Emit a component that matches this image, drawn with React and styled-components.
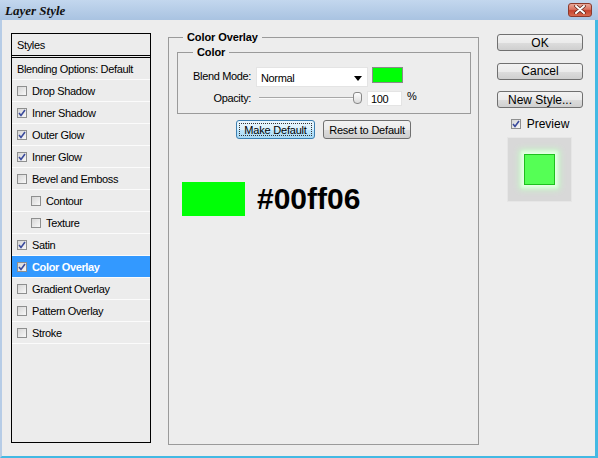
import React from 'react'
import styled, { createGlobalStyle } from 'styled-components'

const GlobalStyle = createGlobalStyle`
  body {
    margin: 0;
    background: #ececec;
    font-family: "Liberation Sans", Arial, sans-serif;
  }
  * { box-sizing: border-box; }
`

const ui = '"Liberation Sans", Arial, sans-serif'

const Window = styled.div`
  display: flex;
  flex-direction: column;
  width: 598px;
  height: 458px;
  overflow: hidden;
  font-family: ${ui};
  font-size: 11px;
  letter-spacing: -0.35px;
  color: #000;
`

const TitleBar = styled.div`
  display: flex;
  align-items: center;
  justify-content: space-between;
  height: 20px;
  padding: 0 6px 0 5px;
  background: linear-gradient(#c3d7ee, #a9c3e1);
`

const Title = styled.div`
  font-family: "Liberation Serif", "Times New Roman", serif;
  font-style: italic;
  font-weight: bold;
  font-size: 13px;
  letter-spacing: 0;
  color: #111;
  padding-top: 2px;
`

const CloseButton = styled.div`
  display: flex;
  align-items: center;
  justify-content: center;
  width: 24px;
  height: 14px;
  margin-top: -1px;
  border: 1px solid #8c3a2c;
  border-radius: 3px;
  background: linear-gradient(#eaa999 0%, #d9715f 45%, #c6432e 55%, #d86a4f 100%);
`

const Body = styled.div`
  flex: 1;
  display: flex;
  align-items: flex-start;
  padding-left: 9px;
  background: #ededed;
  border-left: 2px solid #b6cce6;
  border-right: 3px solid #43b9e3;
  border-bottom: 2px solid #43b9e3;
`

const List = styled.div`
  width: 140px;
  height: 410px;
  margin-top: 13px;
  border: 1px solid #000;
  background: #ececec;
`

const Header = styled.div`
  display: flex;
  align-items: center;
  height: 22px;
  padding-left: 5px;
  border-bottom: 1px solid #000;
  margin-bottom: 1px;
`

const Row = styled.div`
  display: flex;
  align-items: center;
  gap: 5px;
  height: ${p => (p.$first ? 23 : 22)}px;
  padding-left: ${p => (p.$indent ? 19 : 5)}px;
  border-top: ${p => (p.$first ? '1px solid #000' : 'none')};
  border-bottom: 1px solid #fbfbfb;
  background: ${p => (p.$selected ? '#3399ff' : 'transparent')};
  color: ${p => (p.$selected ? '#fff' : '#000')};
  font-weight: ${p => (p.$selected ? 'bold' : 'normal')};
`

const Box = styled.span`
  display: flex;
  align-items: center;
  justify-content: center;
  flex: none;
  width: 10px;
  height: 10px;
  border: 1px solid #8e8f8f;
  background: linear-gradient(135deg, #d6d6d6, #f8f8f8);
`

const Checkbox = ({ checked }) => (
  <Box>
    {checked && (
      <svg width='8' height='8' viewBox='0 0 8 8'>
        <path d='M1 4 L3 6.5 L7 1' fill='none' stroke='#3a4a9c' strokeWidth='1.6' />
      </svg>
    )}
  </Box>
)

const Group = styled.fieldset`
  margin: ${p => p.$margin || 0};
  padding: 0;
  min-width: 0;
  width: ${p => p.$width}px;
  height: ${p => (p.$height ? p.$height + 'px' : 'auto')};
  border: 1px solid #9a9a9a;
`

const Legend = styled.legend`
  margin-left: ${p => p.$offset}px;
  padding: 0 4px;
  font-weight: bold;
  font-size: 11px;
  line-height: 13px;
  letter-spacing: -0.1px;
`

const Inner = styled.div`
  padding: ${p => p.$pad};
`

const FieldRow = styled.div`
  display: flex;
  align-items: flex-start;
  margin-top: ${p => p.$top || 0}px;
`

const Label = styled.div`
  width: 73px;
  text-align: right;
  line-height: 14px;
  padding-top: ${p => p.$pt || 0}px;
`

const Select = styled.div`
  display: flex;
  align-items: center;
  justify-content: space-between;
  width: 112px;
  height: 20px;
  margin-left: 5px;
  padding: 2px 5px 0 4px;
  background: #fff;
  border: 1px solid #e4e4e4;
`

const Swatch = styled.div`
  width: ${p => p.$w}px;
  height: ${p => p.$h}px;
  margin-left: ${p => p.$ml || 0}px;
  background: #00ff06;
  border: ${p => (p.$bordered ? '1px solid #8a8a8a' : 'none')};
`

const Slider = styled.div`
  position: relative;
  width: 103px;
  height: 15px;
  margin-left: 8px;
`

const Track = styled.div`
  margin-top: 6px;
  width: 98px;
  height: 2px;
  border-top: 1px solid #a8a8a8;
  border-bottom: 1px solid #fafafa;
`

const Thumb = styled.div`
  position: absolute;
  left: 94px;
  top: 1px;
  width: 9px;
  height: 12px;
  border: 1px solid #888;
  border-radius: 3px 3px 4px 4px;
  background: linear-gradient(#fdfdfd, #dcdcdc);
`

const Input = styled.div`
  width: 35px;
  height: 15px;
  margin-left: 5px;
  padding: 2px 0 0 3px;
  background: #fff;
  border: 1px solid #e4e4e4;
  line-height: 11px;
`

const Percent = styled.div`
  margin-left: 5px;
  line-height: 11px;
`

const Buttons = styled.div`
  display: flex;
  justify-content: center;
  gap: 8px;
  margin-top: 6px;
`

const Button = styled.div`
  display: flex;
  align-items: center;
  justify-content: center;
  width: ${p => p.$w}px;
  height: ${p => p.$h}px;
  font-size: ${p => p.$fs || 11}px;
  letter-spacing: ${p => (p.$fs ? 0 : -0.2)}px;
  border: 1px solid ${p => (p.$focus ? '#3c7fb1' : '#707070')};
  border-radius: 3px;
  background: ${p =>
    p.$focus
      ? 'linear-gradient(#eaf6fd 0%, #d9f0fc 50%, #bee6fd 51%, #a7d9f5 100%)'
      : 'linear-gradient(#f2f2f2 0%, #ebebeb 50%, #dddddd 51%, #cfcfcf 100%)'};
  margin-bottom: ${p => p.$mb || 0}px;
`

const Focus = styled.span`
  display: flex;
  align-items: center;
  justify-content: center;
  width: calc(100% - 4px);
  height: calc(100% - 4px);
  border: 1px dotted #333;
`

const Sample = styled.div`
  display: flex;
  align-items: center;
  gap: 12px;
  margin-top: 43px;
  padding-left: 5px;
`

const Hex = styled.div`
  font-size: 30px;
  font-weight: bold;
  letter-spacing: 0;
  line-height: 1;
`

const Side = styled.div`
  display: flex;
  flex-direction: column;
  align-items: center;
  width: 86px;
  margin: 14px 0 0 18px;
`

const PreviewRow = styled.div`
  display: flex;
  align-items: center;
  gap: 6px;
  height: 14px;
  margin-top: -1px;
  font-size: 12px;
  letter-spacing: 0;
`

const PreviewBox = styled.div`
  display: flex;
  align-items: center;
  justify-content: center;
  width: 65px;
  height: 65px;
  margin: 6px 2px 0 0;
  background: #d8d8d8;
  border: 1px solid #e6e6e6;
`

const PreviewShape = styled.div`
  width: 31px;
  height: 31px;
  background: #55ff55;
  border: 1px solid #1fbf1f;
  box-shadow: 0 0 3px 3px #e4ffe4, 0 0 6px 5px #c8f5c8;
`

const effects = [
  { label: 'Drop Shadow' },
  { label: 'Inner Shadow', checked: true },
  { label: 'Outer Glow', checked: true },
  { label: 'Inner Glow', checked: true },
  { label: 'Bevel and Emboss' },
  { label: 'Contour', indent: true },
  { label: 'Texture', indent: true },
  { label: 'Satin', checked: true },
  { label: 'Color Overlay', checked: true, selected: true },
  { label: 'Gradient Overlay' },
  { label: 'Pattern Overlay' },
  { label: 'Stroke' }
]

export default function App () {
  return (
    <Window>
      <GlobalStyle />
      <TitleBar>
        <Title>Layer Style</Title>
        <CloseButton>
          <svg width='12' height='9' viewBox='0 0 12 9'>
            <path d='M2 1 L10 8 M10 1 L2 8' stroke='#5a2418' strokeWidth='3.4' strokeLinecap='round' />
            <path d='M2 1 L10 8 M10 1 L2 8' stroke='#fff' strokeWidth='2' strokeLinecap='round' />
          </svg>
        </CloseButton>
      </TitleBar>
      <Body>
        <List>
          <Header>Styles</Header>
          <Row $first>Blending Options: Default</Row>
          {effects.map(e => (
            <Row key={e.label} $indent={e.indent} $selected={e.selected}>
              <Checkbox checked={e.checked} />
              {e.label}
            </Row>
          ))}
        </List>

        <Group $width={311} $height={414} $margin='11px 0 0 17px'>
          <Legend $offset={14}>Color Overlay</Legend>
          <Inner $pad='1px 8px 0'>
            <Group $width={294} $margin='1px 0 0'>
              <Legend $offset={15}>Color</Legend>
              <Inner $pad='8px 0 7px'>
                <FieldRow>
                  <Label $pt={2}>Blend Mode:</Label>
                  <Select>
                    Normal
                    <svg width='8' height='5' viewBox='0 0 8 5'>
                      <path d='M0 0 H8 L4 5 Z' fill='#000' />
                    </svg>
                  </Select>
                  <Swatch $w={31} $h={16} $ml={4} $bordered />
                </FieldRow>
                <FieldRow $top={4}>
                  <Label $pt={0}>Opacity:</Label>
                  <Slider>
                    <Track />
                    <Thumb />
                  </Slider>
                  <Input>100</Input>
                  <Percent>%</Percent>
                </FieldRow>
              </Inner>
            </Group>
            <Buttons>
              <Button $w={79} $h={19} $focus><Focus>Make Default</Focus></Button>
              <Button $w={88} $h={19}>Reset to Default</Button>
            </Buttons>
            <Sample>
              <Swatch $w={63} $h={34} />
              <Hex>#00ff06</Hex>
            </Sample>
          </Inner>
        </Group>

        <Side>
          <Button $w={86} $h={17} $fs={12} $mb={11.5}>OK</Button>
          <Button $w={86} $h={17} $fs={12} $mb={11.5}>Cancel</Button>
          <Button $w={86} $h={17} $fs={12} $mb={10}>New Style...</Button>
          <PreviewRow>
            <Checkbox checked />
            Preview
          </PreviewRow>
          <PreviewBox>
            <PreviewShape />
          </PreviewBox>
        </Side>
      </Body>
    </Window>
  )
}
